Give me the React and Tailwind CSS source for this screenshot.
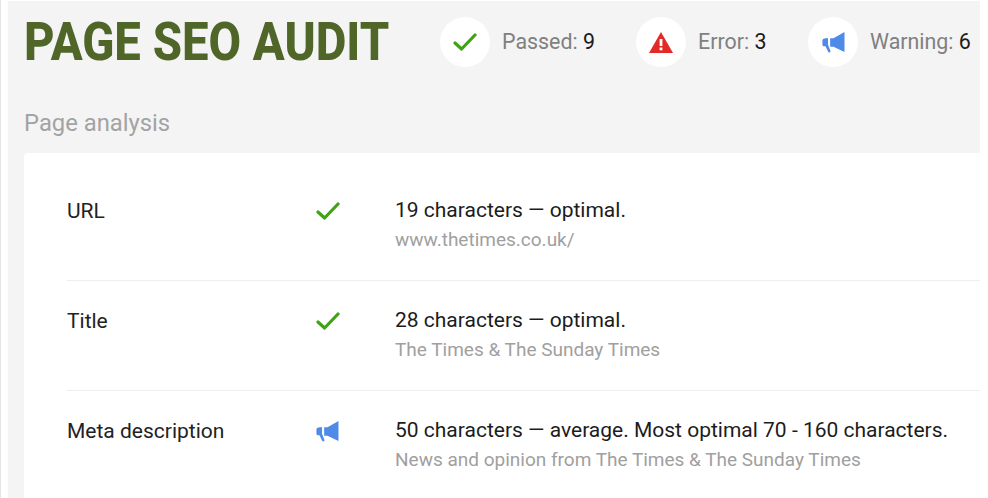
const CheckIcon = ({ className }) => (
  <svg viewBox="0 0 24 20" className={className}>
    <path d="M2 11 L8.6 17 L22 3" fill="none" stroke="#3fa314" strokeWidth="3.2" strokeLinecap="round" strokeLinejoin="round" />
  </svg>
);

const ErrorIcon = ({ className }) => (
  <svg viewBox="0 0 24 21" className={className}>
    <path d="M12 0 L24 21 L0 21 Z" fill="#e22b26" />
    <rect x="10.6" y="7" width="2.8" height="7" fill="#fff" />
    <rect x="10.6" y="15.5" width="2.8" height="2.8" fill="#fff" />
  </svg>
);

const MegaphoneIcon = ({ className }) => (
  <svg viewBox="0 0 24 22" className={className}>
    <path d="M23.5 0 V21 L12 15.5 H8.5 V6.5 H12 Z" fill="#4f8ae8" />
    <path d="M6.2 6.2 V13 L8.8 20 C9.2 21.4 7 22 6.4 20.6 L3.6 15 H2.4 C1 15 0.4 14 0.4 13 V9 C0.4 7.6 1.4 6.8 2.6 6.8 Z" fill="#4f8ae8" />
  </svg>
);

const stats = [
  { label: 'Passed:', value: 9, icon: <CheckIcon className="w-[24px] h-[20px]" />, width: 'w-[196px]' },
  { label: 'Error:', value: 3, icon: <ErrorIcon className="w-[24px] h-[21px]" />, width: 'w-[172px]' },
  { label: 'Warning:', value: 6, icon: <MegaphoneIcon className="w-[23px] h-[21px]" />, width: 'w-[164px]' },
];

const rows = [
  { name: 'URL', icon: <CheckIcon className="w-[24px] h-[20px]" />, title: '19 characters — optimal.', sub: 'www.thetimes.co.uk/' },
  { name: 'Title', icon: <CheckIcon className="w-[24px] h-[20px]" />, title: '28 characters — optimal.', sub: 'The Times & The Sunday Times' },
  { name: 'Meta description', icon: <MegaphoneIcon className="w-[23px] h-[21px]" />, title: '50 characters — average. Most optimal 70 - 160 characters.', sub: 'News and opinion from The Times & The Sunday Times' },
];

export default function App() {
  return (
    <div className="w-[988px] h-[498px] overflow-hidden bg-white border-l border-[#e4e4e4] pl-[7px] pr-[8px] pt-[1px] font-['Roboto',sans-serif]">
      <div className="h-[497px] bg-[#f4f4f4] pl-[16px] overflow-hidden">
        {/* Cabecera */}
        <div className="flex items-center h-[82px]">
          <div className="w-[416px] shrink-0">
            <h1 className="origin-left scale-x-[0.875] whitespace-nowrap text-[54px] leading-[60px] font-extrabold text-[#506629]">
              PAGE SEO AUDIT
            </h1>
          </div>
          {stats.map((s) => (
            <div key={s.label} className={`flex items-center shrink-0 ${s.width}`}>
              <div className="flex items-center justify-center w-[50px] h-[50px] rounded-full bg-white">{s.icon}</div>
              <div className="ml-[12px] text-[21.4px] text-[#808080] whitespace-nowrap">
                {s.label} <span className="text-[#1c1c1c]">{s.value}</span>
              </div>
            </div>
          ))}
        </div>

        <h2 className="mt-[23px] h-[47px] text-[23.8px] leading-[34px] text-[#a3a3a3]">Page analysis</h2>

        {/* Tarjeta */}
        <div className="bg-white rounded-tl-[4px] pl-[43px] pt-[18px]">
          {rows.map((r, i) => (
            <div key={r.name} className={`flex h-[110px] pt-[23px] ${i < rows.length - 1 ? 'border-b border-[#eeeeee]' : ''}`}>
              <div className="w-[248px] shrink-0 pt-[3px] text-[21px] leading-[28px] text-[#222222]">{r.name}</div>
              <div className="w-[80px] shrink-0 pt-[7px] pl-[1px]">{r.icon}</div>
              <div>
                <div className="text-[21px] leading-[28px] text-[#1c1c1c] pt-[2px]">{r.title}</div>
                <div className="text-[19px] leading-[28px] mt-[2px] text-[#a0a0a0]">{r.sub}</div>
              </div>
            </div>
          ))}
        </div>
      </div>
    </div>
  );
}
